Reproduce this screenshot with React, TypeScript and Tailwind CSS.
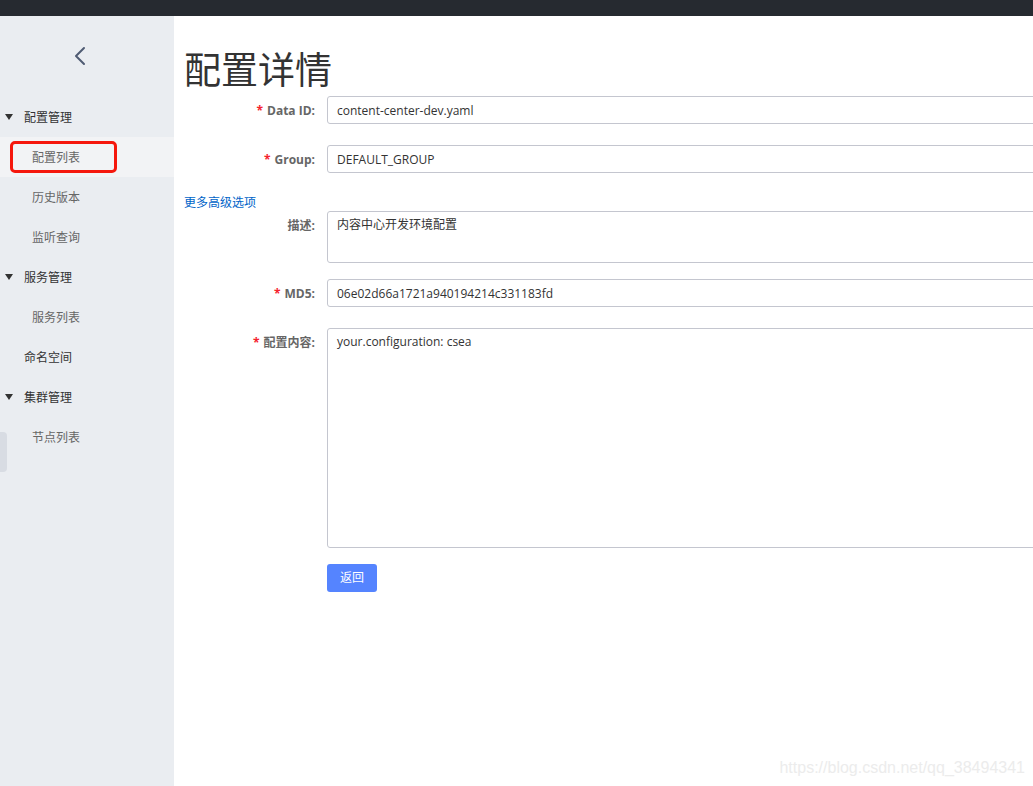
import React from 'react';

const FONT = { fontFamily: '"Open Sans", "Noto Sans CJK SC", sans-serif' };

type NavItem = { label: string; level: 0 | 1; group?: boolean; active?: boolean };

const NAV: NavItem[] = [
  { label: '配置管理', level: 0, group: true },
  { label: '配置列表', level: 1, active: true },
  { label: '历史版本', level: 1 },
  { label: '监听查询', level: 1 },
  { label: '服务管理', level: 0, group: true },
  { label: '服务列表', level: 1 },
  { label: '命名空间', level: 0 },
  { label: '集群管理', level: 0, group: true },
  { label: '节点列表', level: 1 },
];

function Sidebar() {
  return (
    <aside className="relative w-[174px] shrink-0 bg-[#eaedf1]">
      <div className="flex h-[81px] items-start justify-center pt-[29px]">
        <svg width="20" height="22" viewBox="0 0 20 22" className="ml-[-12px]">
          <path d="M13 3 L5 11 L13 19" fill="none" stroke="#4f5b73" strokeWidth="2" strokeLinecap="round" strokeLinejoin="round" />
        </svg>
      </div>
      <ul>
        {NAV.map((item) => (
          <li
            key={item.label}
            className={`relative flex h-10 items-center pt-[2px] text-xs ${item.active ? 'bg-[#f2f3f5]' : ''} ${
              item.level === 1 ? 'pl-8 text-[#666]' : 'pl-6 text-[#333]'
            }`}
          >
            {item.group && (
              <span className="absolute left-[5px] top-[17px] h-0 w-0 border-x-[4px] border-t-[6px] border-x-transparent border-t-[#333]" />
            )}
            {item.label}
            {item.active && (
              <span className="absolute left-[10px] top-[4px] h-[32px] w-[107px] rounded-[5px] border-[3px] border-[#f5170c]" />
            )}
          </li>
        ))}
      </ul>
      <div className="absolute left-0 top-[416px] h-[40px] w-[7px] rounded-r-[4px] bg-[#d8dce3]" />
    </aside>
  );
}

function Label({ text, required }: { text: string; required?: boolean }) {
  return (
    <div className="h-[28px] w-[132px] shrink-0 pr-[1px] text-right text-xs font-bold leading-[30px] text-[#666]">
      {required && <span className="mr-1 text-[#f5222d]">*</span>}
      {text}
    </div>
  );
}

function Field({ label, required, value }: { label: string; required?: boolean; value: string }) {
  return (
    <div className="flex items-start">
      <Label text={label} required={required} />
      <div className="ml-[11px] h-[28px] w-[760px] shrink-0 rounded-[3px] border border-[#c4c6cf] px-[9px] text-xs leading-[28px] text-[#333]">
        {value}
      </div>
    </div>
  );
}

function Area({ label, required, value, height }: { label: string; required?: boolean; value: string; height: string }) {
  return (
    <div className="flex items-start">
      <Label text={label} required={required} />
      <div className={`ml-[11px] ${height} w-[760px] shrink-0 rounded-[3px] border border-[#c4c6cf] px-[9px] pt-[5px] text-xs leading-[16px] text-[#333]`}>
        {value}
      </div>
    </div>
  );
}

export default function App() {
  return (
    <div className="flex h-[786px] w-[1033px] flex-col overflow-hidden bg-white" style={FONT}>
      <div className="h-4 shrink-0 bg-[#262a30]" />
      <div className="flex flex-1">
        <Sidebar />
        <main className="relative flex-1 overflow-hidden pl-[10px]">
          <h1 className="mt-[34px] text-[37px] leading-[40px] text-[#333]">配置详情</h1>
          <div className="mt-[6px] flex flex-col">
            <Field label="Data ID:" required value="content-center-dev.yaml" />
            <div className="mt-[21px]">
              <Field label="Group:" required value="DEFAULT_GROUP" />
            </div>
            <a className="mt-[22px] text-xs leading-[16px] text-[#0064c8]">更多高级选项</a>
            <div>
              <Area label="描述:" value="内容中心开发环境配置" height="h-[52px]" />
            </div>
            <div className="mt-[16px]">
              <Field label="MD5:" required value="06e02d66a1721a940194214c331183fd" />
            </div>
            <div className="mt-[21px]">
              <Area label="配置内容:" required value="your.configuration: csea" height="h-[220px]" />
            </div>
            <div className="mt-[16px] pl-[143px]">
              <button className="h-[28px] w-[50px] rounded-[3px] bg-[#5584ff] text-xs text-white">返回</button>
            </div>
          </div>
          <div
            className="absolute bottom-[6px] right-[8px] text-[16px] text-[#ececec]"
            style={{ fontFamily: '"Liberation Sans", sans-serif' }}
          >
            https://blog.csdn.net/qq_38494341
          </div>
        </main>
      </div>
    </div>
  );
}
